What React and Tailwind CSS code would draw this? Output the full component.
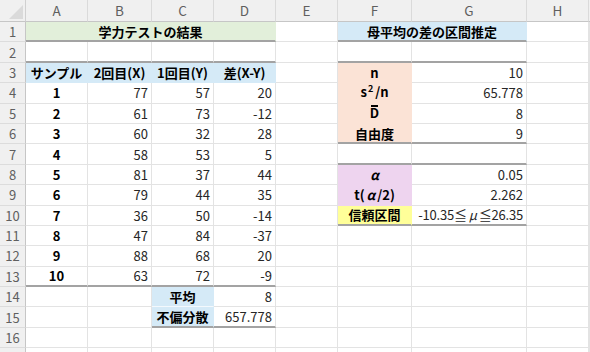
import React from "react";

const BASE = "flex items-center min-w-0 overflow-hidden whitespace-nowrap";
const W = "border-r border-b border-[#e3e3e3] bg-white";
const WT = "border-r border-b-2 border-[#e3e3e3] border-b-[#a3a3a3] bg-white";
const NUM = "justify-end pr-[3px] text-[#262626]";
const LAB = "justify-center font-bold text-black";

const BLUE = "bg-[#d5eaf7] border-r border-b border-transparent";
const BLUE_T = "bg-[#d5eaf7] border-r border-b-2 border-transparent border-b-[#a3a3a3]";
const GREEN_T = "bg-[#e2efda] border-r border-b-2 border-transparent border-b-[#a3a3a3]";
const PEACH = "bg-[#fbe3d6] border-r border-b border-transparent";
const PEACH_T = "bg-[#fbe3d6] border-r border-b-2 border-transparent border-b-[#a3a3a3]";
const PURPLE = "bg-[#eed4ef] border-r border-b border-transparent";
const YELLOW_T = "bg-[#ffff99] border-r border-b-2 border-transparent border-b-[#a3a3a3]";

function C({ className, children }) {
  return <div className={`${BASE} ${className}`}>{children}</div>;
}

function RowNum({ n }) {
  return (
    <div className="flex items-center justify-center bg-[#f0f0f0] border-r border-b border-r-[#c6c6c6] border-b-[#dcdcdc] text-[#5f5f5f] text-[13px]">
      {n}
    </div>
  );
}

const data = [
  [1, 77, 57, 20],
  [2, 61, 73, -12],
  [3, 60, 32, 28],
  [4, 58, 53, 5],
  [5, 81, 37, 44],
  [6, 79, 44, 35],
  [7, 36, 50, -14],
  [8, 47, 84, -37],
  [9, 88, 68, 20],
  [10, 63, 72, -9],
];

const fg = {
  3: [PEACH, "n", W, "10"],
  4: [
    PEACH,
    <span key="s" className="leading-[18px]">
      s<span className="relative -top-[5px] text-[9px] ml-[1px] mr-[2px]">2</span>/n
    </span>,
    W,
    "65.778",
  ],
  5: [
    PEACH,
    <span key="d" className="relative inline-block leading-[14px]">
      D
      <span className="absolute left-[1px] right-[1px] top-[-1px] h-[1.5px] bg-black" />
    </span>,
    W,
    "8",
  ],
  6: [PEACH_T, "自由度", WT, "9"],
  7: [WT, "", WT, ""],
  8: [PURPLE, <i key="a">α</i>, W, "0.05"],
  9: [PURPLE, <span key="t">t(<i className="mx-[2px]">α</i>/2)</span>, W, "2.262"],
  10: [
    YELLOW_T,
    "信頼区間",
    WT,
    <span key="r" className="tracking-[-0.2px]">
      -10.35≦<i className="mx-[2px]">μ</i>≦26.35
    </span>,
  ],
};

export default function App() {
  const letters = ["A", "B", "C", "D", "E", "F", "G", "H"];
  const rows = [];

  rows.push(
    <React.Fragment key="r1">
      <RowNum n={1} />
      <C className={`${GREEN_T} ${LAB} col-span-4`}>学力テストの結果</C>
      <C className={W} />
      <C className={`${BLUE_T} ${LAB} col-span-2`}>母平均の差の区間推定</C>
      <C className={W} />
      <C className={W} />
    </React.Fragment>
  );

  rows.push(
    <React.Fragment key="r2">
      <RowNum n={2} />
      <C className={WT} />
      <C className={WT} />
      <C className={WT} />
      <C className={WT} />
      <C className={W} />
      <C className={WT} />
      <C className={WT} />
      <C className={W} />
      <C className={W} />
    </React.Fragment>
  );

  rows.push(
    <React.Fragment key="r3">
      <RowNum n={3} />
      <C className={`${BLUE} ${LAB}`}>サンプル</C>
      <C className={`${BLUE} ${LAB}`}>2回目(X)</C>
      <C className={`${BLUE} ${LAB}`}>1回目(Y)</C>
      <C className={`${BLUE} ${LAB}`}>差(X-Y)</C>
      <C className={W} />
      <C className={`${fg[3][0]} ${LAB}`}>{fg[3][1]}</C>
      <C className={`${fg[3][2]} ${NUM}`}>{fg[3][3]}</C>
      <C className={W} />
      <C className={W} />
    </React.Fragment>
  );

  data.forEach((d, i) => {
    const r = i + 4;
    const last = r === 13;
    const wc = last ? WT : W;
    const f = fg[r];
    rows.push(
      <React.Fragment key={`r${r}`}>
        <RowNum n={r} />
        <C className={`${wc} ${LAB}`}>{d[0]}</C>
        <C className={`${wc} ${NUM}`}>{d[1]}</C>
        <C className={`${wc} ${NUM}`}>{d[2]}</C>
        <C className={`${wc} ${NUM}`}>{d[3]}</C>
        <C className={W} />
        {f ? (
          <>
            <C className={`${f[0]} ${LAB}`}>{f[1]}</C>
            <C className={`${f[2]} ${NUM}`}>{f[3]}</C>
          </>
        ) : (
          <>
            <C className={W} />
            <C className={W} />
          </>
        )}
        <C className={W} />
        <C className={W} />
      </React.Fragment>
    );
  });

  rows.push(
    <React.Fragment key="r14">
      <RowNum n={14} />
      <C className={W} />
      <C className={W} />
      <C className={`bg-[#d5eaf7] border-r border-b border-transparent border-b-[#f4f9fd] ${LAB}`}>平均</C>
      <C className={`${W} ${NUM}`}>8</C>
      <C className={W} />
      <C className={W} />
      <C className={W} />
      <C className={W} />
      <C className={W} />
    </React.Fragment>
  );

  rows.push(
    <React.Fragment key="r15">
      <RowNum n={15} />
      <C className={W} />
      <C className={W} />
      <C className={`${BLUE_T} ${LAB}`}>不偏分散</C>
      <C className={`${WT} ${NUM}`}>657.778</C>
      <C className={W} />
      <C className={W} />
      <C className={W} />
      <C className={W} />
      <C className={W} />
    </React.Fragment>
  );

  [16, 17].forEach((r) => {
    rows.push(
      <React.Fragment key={`r${r}`}>
        <RowNum n={r === 16 ? r : ""} />
        {Array.from({ length: 9 }).map((_, k) => (
          <C key={k} className={W} />
        ))}
      </React.Fragment>
    );
  });

  return (
    <div className="w-[590px] h-[352px] overflow-hidden bg-white font-['Noto_Sans_CJK_JP','Noto_Sans',sans-serif] text-[13px] leading-none">
      <div className="grid grid-cols-[26px_62px_64px_62px_62px_62px_74px_115px_62px_1fr] grid-rows-[22px_repeat(17,20.4px)]">
        <div className="relative bg-[#f0f0f0] border-r border-b border-r-[#d0d0d0] border-b-[#c6c6c6] overflow-hidden">
          <svg className="absolute right-[2px] bottom-[2px]" width="14" height="14" viewBox="0 0 14 14">
            <polygon points="14,0 14,14 0,14" fill="#dadada" />
          </svg>
        </div>
        {letters.map((l) => (
          <div
            key={l}
            className="flex items-center justify-center bg-[#f0f0f0] border-r border-b border-r-[#dadada] border-b-[#c6c6c6] text-[#5f5f5f] text-[13.5px]"
          >
            {l}
          </div>
        ))}
        <div className="bg-[#f0f0f0] border-b border-b-[#c6c6c6]" />
        {rows}
      </div>
    </div>
  );
}
